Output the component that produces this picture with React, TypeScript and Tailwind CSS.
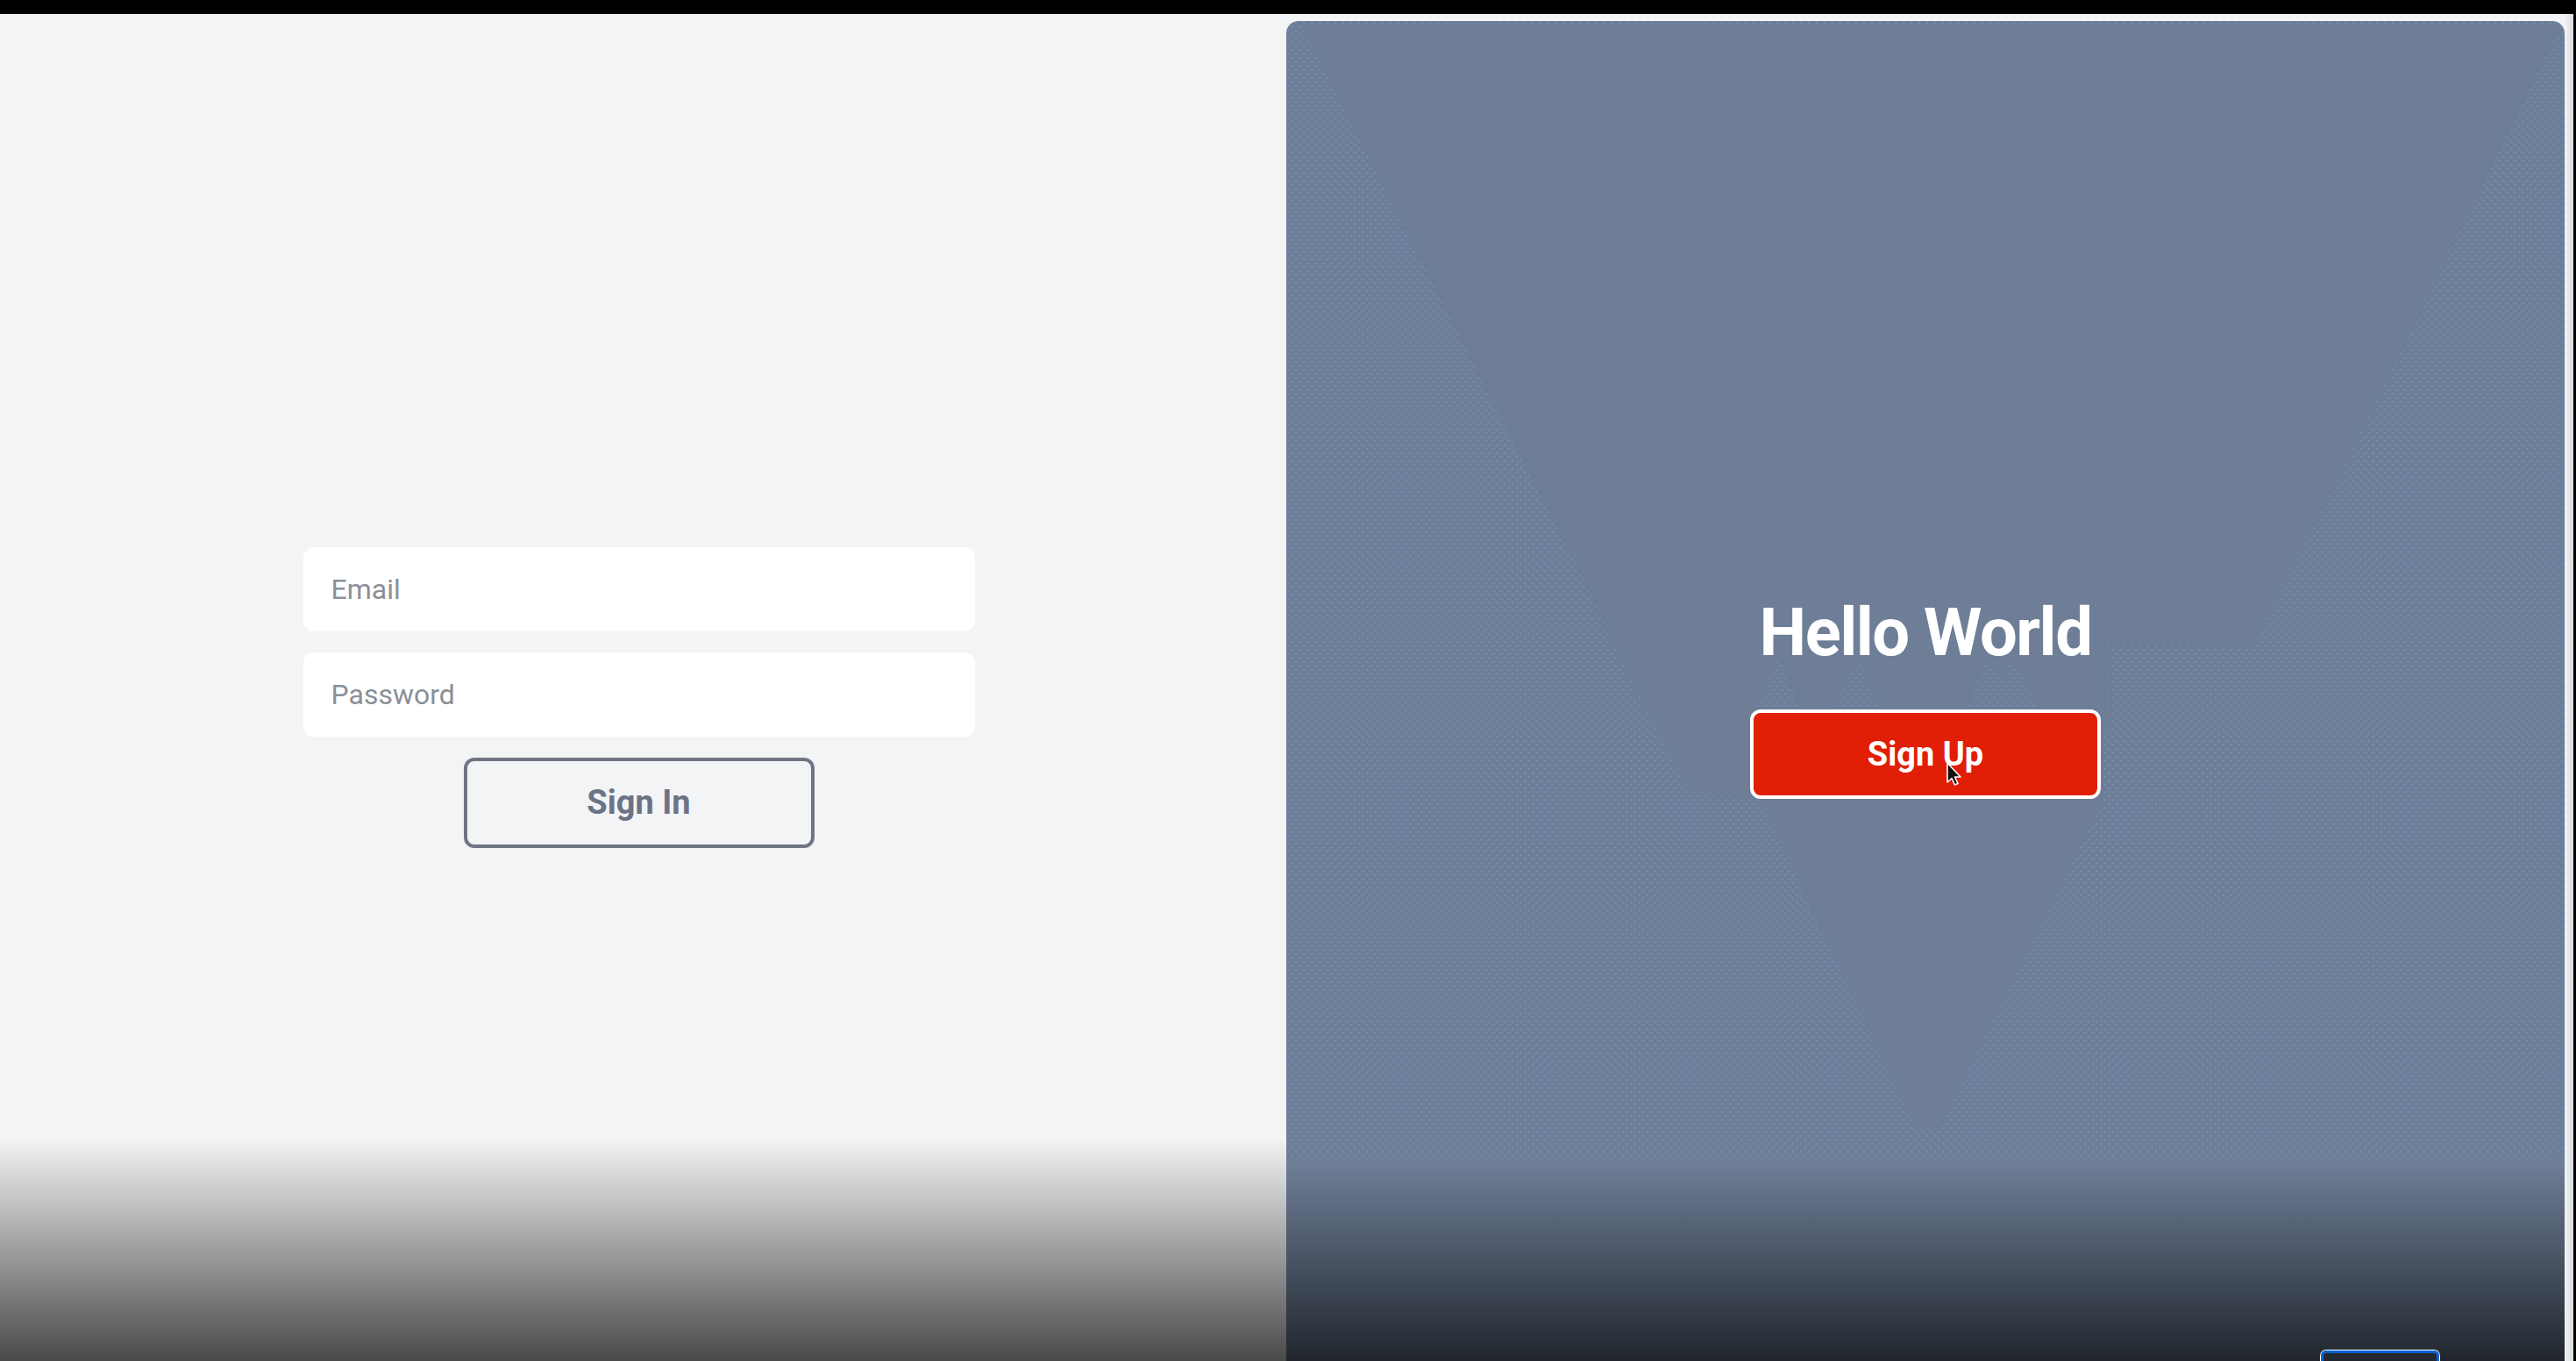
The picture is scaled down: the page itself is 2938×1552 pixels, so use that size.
import { useState } from 'react'

function Dots() {
  // faint dotted wedges behind the right panel content
  return (
    <svg
      className="absolute left-0 top-0 pointer-events-none"
      width="1458"
      height="1528"
      viewBox="0 0 1458 1528"
    >
      <defs>
        <pattern id="dots" width="9" height="9" patternUnits="userSpaceOnUse">
          <circle cx="2" cy="2" r="0.8" fill="#7aa6ff" fillOpacity="0.75" />
          <circle cx="6.5" cy="6.5" r="0.8" fill="#7aa6ff" fillOpacity="0.75" />
        </pattern>
      </defs>
      <rect x="0" y="0" width="1458" height="1298" rx="16" fill="url(#dots)" />
      <polygon
        points="19,6 1454,6 1107,709 937,709 931,887 746,1263 718,1263 539,887 460,877"
        fill="#6e7e97"
      />
      <polygon points="529,800 561,726 593,800" fill="url(#dots)" />
      <polygon points="619,800 651,726 683,800" fill="url(#dots)" />
      <polygon points="769,800 801,726 815,748 830,726 863,800" fill="url(#dots)" />
    </svg>
  )
}

function Cursor() {
  return (
    <svg className="absolute left-[219px] top-[55px]" width="20" height="30" viewBox="0 0 20 30">
      <path
        d="M2 2 L2 24 L7 19.5 L10.5 27 L14 25.5 L10.5 18 L17 18 Z"
        fill="#111"
        stroke="#fff"
        strokeWidth="1.6"
        strokeLinejoin="round"
      />
    </svg>
  )
}

export default function App() {
  const [email, setEmail] = useState('')
  const [password, setPassword] = useState('')

  return (
    <div className="relative w-[2938px] h-[1552px] overflow-hidden bg-black flex flex-col font-['Roboto','Liberation_Sans',sans-serif]">
      <div className="h-4 shrink-0" />

      <div className="flex flex-1 bg-[#f3f4f6] mr-[3px]">
        {/* Sign in side */}
        <div className="relative w-[1467px] shrink-0 flex flex-col items-center pt-[608px] pr-[10px]">
          <form className="flex flex-col items-center gap-6" onSubmit={(e) => e.preventDefault()}>
            <input
              type="email"
              value={email}
              onChange={(e) => setEmail(e.target.value)}
              placeholder="Email"
              className="w-[766px] h-[96px] rounded-[12px] bg-white px-8 text-[32px] text-gray-700 placeholder:text-[#8b8f97] outline-none"
            />
            <input
              type="password"
              value={password}
              onChange={(e) => setPassword(e.target.value)}
              placeholder="Password"
              className="w-[766px] h-[96px] rounded-[12px] bg-white px-8 text-[32px] text-gray-700 placeholder:text-[#8b8f97] outline-none"
            />
            <button
              type="submit"
              className="w-[400px] h-[103px] rounded-[12px] border-4 border-[#6f7584] text-[38px] font-bold text-[#6c7384]"
            >
              Sign In
            </button>
          </form>
          <div className="absolute inset-x-0 bottom-0 h-[255px] bg-linear-to-b from-transparent to-black/70" />
        </div>

        {/* Sign up side */}
        <div className="relative w-[1458px] shrink-0 mt-2 rounded-t-[14px] bg-[#6e7e97] overflow-hidden flex flex-col items-center pt-[659px]">
          <Dots />
          <h1 className="relative text-[76px] leading-none font-bold tracking-[-0.02em] text-white">
            Hello World
          </h1>
          <button className="relative mt-[50px] w-[400px] h-[102px] rounded-[12px] border-4 border-white bg-[#e11e06] text-[38px] font-bold text-white">
            Sign Up
            <Cursor />
          </button>
          <div className="absolute inset-x-0 bottom-0 h-[225px] bg-linear-to-b from-transparent to-black/70" />
        </div>

        <div className="flex-1 bg-linear-to-r from-[#f3f4f6] to-[#d9dadd]" />
      </div>

      <div className="absolute left-[2647px] top-[1540px] w-[135px] h-[24px] rounded-t-[6px] border-[3px] border-[#0a63d6] shadow-[0_0_0_1px_white]" />
    </div>
  )
}
